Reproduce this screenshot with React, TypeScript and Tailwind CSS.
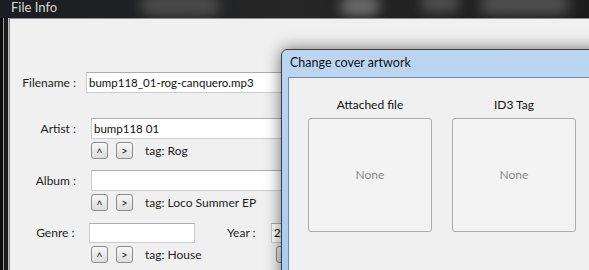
function NavButtons({ tag }: { tag: string }) {
  return (
    <div className="flex items-center h-[17px] mt-[3px] ml-[81px]">
      <button className="w-[17px] h-[17px] rounded-[3px] border border-[#8c8c8c] bg-gradient-to-b from-[#f6f6f6] to-[#dedede] text-[11px] leading-none text-[#222] flex items-center justify-center pt-[3px]">
        ^
      </button>
      <button className="w-[17px] h-[17px] ml-[8px] rounded-[3px] border border-[#8c8c8c] bg-gradient-to-b from-[#f6f6f6] to-[#dedede] text-[11px] leading-none text-[#222] flex items-center justify-center">
        &gt;
      </button>
      <span className="ml-[12px] whitespace-nowrap text-[#1e1e1e]">{tag}</span>
    </div>
  );
}

function Field({ label, value, wide }: { label: string; value?: string; wide?: boolean }) {
  return (
    <div className="flex items-center h-[21px]">
      <div className="w-[66px] text-right whitespace-nowrap text-[#1e1e1e]">{label}</div>
      <div
        className={
          (wide ? "ml-[10px]" : "ml-[15px]") +
          " flex-1 h-[21px] bg-white border border-[#c9ccd2] border-t-[#abadb3] flex items-center pl-[2px] text-[11.5px] text-[#111]"
        }
      >
        {value}
      </div>
    </div>
  );
}

export default function App() {
  return (
    <div
      className="relative w-[589px] h-[270px] overflow-hidden bg-[#121212] text-[12px]"
      style={{ fontFamily: 'Lato, "Noto Sans", "Liberation Sans", sans-serif' }}
    >
      {/* Title band */}
      <div className="relative h-[18px] bg-gradient-to-r from-[#1b1d22] via-[#262626] to-[#1c1c1c] overflow-hidden">
        <div className="absolute left-[140px] top-[-6px] w-[80px] h-[22px] rounded-full bg-[#4a4a4a] blur-[6px]" />
        <div className="absolute left-[340px] top-[-4px] w-[40px] h-[20px] rounded-full bg-[#6a6a6a] blur-[6px]" />
        <div className="absolute left-[420px] top-[-6px] w-[40px] h-[18px] rounded-full bg-[#505050] blur-[6px]" />
        <div className="absolute left-[480px] top-[-6px] w-[90px] h-[20px] rounded-full bg-[#555] blur-[7px]" />
        <div className="relative pl-[11px] pt-[1px] text-[13px] leading-[13px] text-[#d6d6d6]">File Info</div>
      </div>

      <div className="flex h-[252px]">
        {/* Left window frame */}
        <div className="w-[9px] flex">
          <div className="w-[3px] bg-[#0c0c0c]" />
          <div className="w-[1px] bg-[#9a9a9a]" />
          <div className="w-[4px] bg-[#1a1a1a]" />
          <div className="w-[1px] bg-[#bdbdbd]" />
        </div>

        {/* Client area */}
        <div className="flex-1 bg-[#f0f0f0] border-t border-l border-[#8f8f8f] pt-[53px]">
          <div className="w-[300px]">
            <Field label="Filename :" value="bump118_01-rog-canquero.mp3" wide />

            <div className="mt-[25px]">
              <Field label="Artist :" value="bump118 01" />
              <NavButtons tag="tag: Rog" />
            </div>

            <div className="mt-[11px]">
              <Field label="Album :" />
              <NavButtons tag="tag: Loco Summer EP" />
            </div>

            <div className="mt-[12px]">
              <div className="flex items-center h-[20px]">
                <div className="w-[66px] text-right text-[#1e1e1e]">Genre :</div>
                <div className="ml-[15px] w-[108px] h-[20px] bg-white border border-[#c9ccd2] border-t-[#abadb3]" />
                <div className="ml-[32px] w-[45px] whitespace-nowrap text-[#1e1e1e]">Year :</div>
                <div className="w-[40px] h-[20px] bg-white border border-[#c9ccd2] border-t-[#abadb3] pl-[2px] flex items-center text-[#111]">
                  2
                </div>
              </div>
              <div className="flex">
                <div className="w-[266px]">
                  <NavButtons tag="tag: House" />
                </div>
                <div className="mt-[3px] w-[17px] h-[17px] rounded-[3px] border border-[#8c8c8c] bg-gradient-to-b from-[#f6f6f6] to-[#dedede]" />
              </div>
            </div>
          </div>
        </div>
      </div>

      {/* Change cover artwork dialog */}
      <div className="absolute left-[281px] top-[49px] w-[330px] h-[240px] rounded-t-[6px] border border-[#3c3c3c] bg-gradient-to-b from-[#bcd6f1] to-[#aacbee] shadow-[0_0_16px_rgba(0,0,0,0.55)] flex flex-col">
        <div className="h-[27px] pl-[8px] flex items-center text-[12.5px] text-[#111]">Change cover artwork</div>
        <div className="flex-1 ml-[6px] border-t border-l border-[#6f8bab] bg-[#f0f0f0] pt-[19px] pl-[19px]">
          <div className="flex gap-[20px]">
            {["Attached file", "ID3 Tag"].map((t) => (
              <div key={t} className="w-[124px] flex flex-col items-center">
                <div className="h-[16px] leading-[16px] text-[#111]">{t}</div>
                <div className="mt-[5px] w-[124px] h-[114px] rounded-[3px] border border-[#adadad] bg-[#f3f3f3] flex items-center justify-center text-[#8a8a8a]">
                  None
                </div>
              </div>
            ))}
          </div>
        </div>
      </div>
    </div>
  );
}
